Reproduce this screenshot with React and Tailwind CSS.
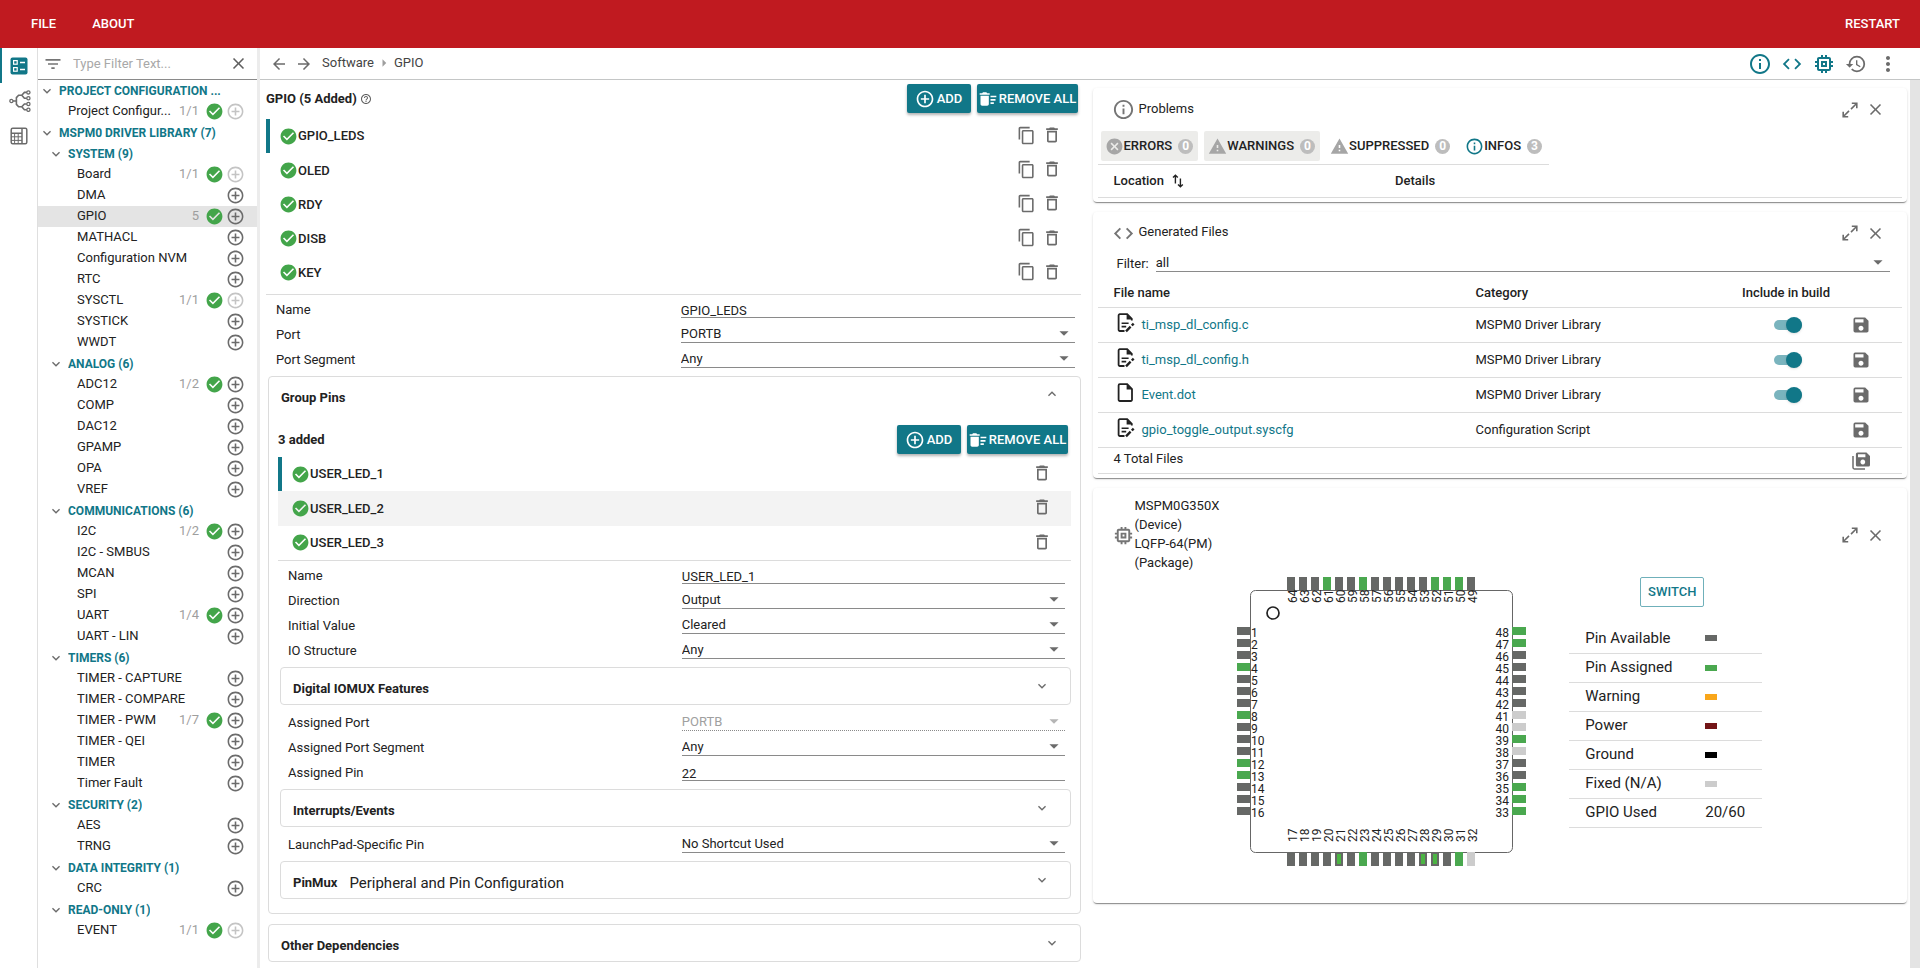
import { useState } from 'react'
import clsx from 'clsx'
import {
  MdAddCircleOutline,
  MdArrowBack,
  MdArrowDropDown,
  MdArrowForward,
  MdArrowRight,
  MdCancel,
  MdCheckCircle,
  MdClose,
  MdCode,
  MdContentCopy,
  MdDeleteSweep,
  MdExpandLess,
  MdExpandMore,
  MdFilterList,
  MdHelpOutline,
  MdHistory,
  MdInfoOutline,
  MdMemory,
  MdMoreVert,
  MdOutlineDelete,
  MdSave,
  MdWarning,
} from 'react-icons/md'

const TREE = [
  { type: 'root', label: 'PROJECT CONFIGURATION ...' },
  { type: 'item', label: 'Project Configur...', count: '1/1', full: true, shallow: true },
  { type: 'root', label: 'MSPM0 DRIVER LIBRARY (7)' },
  { type: 'group', label: 'SYSTEM (9)' },
  { type: 'item', label: 'Board', count: '1/1', full: true },
  { type: 'item', label: 'DMA' },
  { type: 'item', label: 'GPIO', count: '5', active: true },
  { type: 'item', label: 'MATHACL' },
  { type: 'item', label: 'Configuration NVM' },
  { type: 'item', label: 'RTC' },
  { type: 'item', label: 'SYSCTL', count: '1/1', full: true },
  { type: 'item', label: 'SYSTICK' },
  { type: 'item', label: 'WWDT' },
  { type: 'group', label: 'ANALOG (6)' },
  { type: 'item', label: 'ADC12', count: '1/2' },
  { type: 'item', label: 'COMP' },
  { type: 'item', label: 'DAC12' },
  { type: 'item', label: 'GPAMP' },
  { type: 'item', label: 'OPA' },
  { type: 'item', label: 'VREF' },
  { type: 'group', label: 'COMMUNICATIONS (6)' },
  { type: 'item', label: 'I2C', count: '1/2' },
  { type: 'item', label: 'I2C - SMBUS' },
  { type: 'item', label: 'MCAN' },
  { type: 'item', label: 'SPI' },
  { type: 'item', label: 'UART', count: '1/4' },
  { type: 'item', label: 'UART - LIN' },
  { type: 'group', label: 'TIMERS (6)' },
  { type: 'item', label: 'TIMER - CAPTURE' },
  { type: 'item', label: 'TIMER - COMPARE' },
  { type: 'item', label: 'TIMER - PWM', count: '1/7' },
  { type: 'item', label: 'TIMER - QEI' },
  { type: 'item', label: 'TIMER' },
  { type: 'item', label: 'Timer Fault' },
  { type: 'group', label: 'SECURITY (2)' },
  { type: 'item', label: 'AES' },
  { type: 'item', label: 'TRNG' },
  { type: 'group', label: 'DATA INTEGRITY (1)' },
  { type: 'item', label: 'CRC' },
  { type: 'group', label: 'READ-ONLY (1)' },
  { type: 'item', label: 'EVENT', count: '1/1', full: true },
]

const INSTANCES = ['GPIO_LEDS', 'OLED', 'RDY', 'DISB', 'KEY']
const PINS = ['USER_LED_1', 'USER_LED_2', 'USER_LED_3']

const FILES = [
  { name: 'ti_msp_dl_config.c', category: 'MSPM0 Driver Library', edited: true, include: true },
  { name: 'ti_msp_dl_config.h', category: 'MSPM0 Driver Library', edited: true, include: true },
  { name: 'Event.dot', category: 'MSPM0 Driver Library', edited: false, include: true },
  { name: 'gpio_toggle_output.syscfg', category: 'Configuration Script', edited: true, include: false },
]

const LEGEND = [
  { label: 'Pin Available', color: 'bg-[#666866]' },
  { label: 'Pin Assigned', color: 'bg-[#4aa84f]' },
  { label: 'Warning', color: 'bg-[#f9a61a]' },
  { label: 'Power', color: 'bg-[#731517]' },
  { label: 'Ground', color: 'bg-black' },
  { label: 'Fixed (N/A)', color: 'bg-[#cccccc]' },
]

const ASSIGNED = [4, 8, 12, 13, 23, 31, 33, 34, 35, 39, 47, 48, 50, 51, 52, 58, 61]
const FIXED = [32, 38, 40, 41]
const SHARED = [21, 28, 29]

function pinColor(n) {
  if (ASSIGNED.includes(n)) return '#4aa84f'
  if (FIXED.includes(n)) return '#cccccc'
  return '#666866'
}

function ConfigIcon() {
  return (
    <svg width="18" height="18" viewBox="0 0 18 18" fill="none">
      <rect x="0.5" y="0.5" width="17" height="17" rx="2" fill="#117788" />
      <g stroke="#fff" strokeWidth="1.2">
        <rect x="3.6" y="3.6" width="3.6" height="3.6" />
        <rect x="3.6" y="10.6" width="3.6" height="3.6" />
        <path d="M10 5.5h5M10 12.5h5" strokeWidth="1.6" />
      </g>
    </svg>
  )
}

function TreeIcon() {
  return (
    <svg width="22" height="22" viewBox="0 0 22 22" fill="none" stroke="#6b6b6b" strokeWidth="1.3">
      <circle cx="2.4" cy="11" r="1.6" />
      <circle cx="19.4" cy="2.4" r="1.6" />
      <circle cx="19.4" cy="8.2" r="1.6" />
      <circle cx="19.4" cy="14" r="1.6" />
      <circle cx="19.4" cy="19.8" r="1.6" />
      <path d="M4 11h3.4M17.8 2.4h-2.4l-2.6 2.8 2.6 3h2.4M17.8 14h-2.4l-2.6 2.8 2.6 3h2.4M12.8 5.2H9.6L7.4 7.6v6.8l2.2 2.4h3.2" strokeWidth="1.6" />
    </svg>
  )
}

function BoardIcon() {
  return (
    <svg width="18" height="18" viewBox="0 0 18 18" fill="none" stroke="#6b6b6b">
      <rect x="1.2" y="1.2" width="15.6" height="15.6" rx="1.5" strokeWidth="1.5" />
      <path d="M12 1v16M1 6.2h11" strokeWidth="1.5" />
      <path d="M4.6 6v11M8.2 6v11M1 9.8h11M1 13.4h11" strokeWidth="1" />
    </svg>
  )
}

function ExpandIcon() {
  return (
    <svg width="16" height="16" viewBox="0 0 16 16" fill="none" stroke="currentColor" strokeWidth="1.6">
      <path d="M9.8 1.3h5v5M14.6 1.5L9 7.1M6.2 14.7h-5v-5M1.4 14.5L7 8.9" />
    </svg>
  )
}

function SwapIcon() {
  return (
    <svg width="12" height="14" viewBox="0 0 12 14" fill="none" stroke="#222" strokeWidth="1.4">
      <path d="M3.4 9.5V1.2M1 3.6l2.4-2.4 2.4 2.4M8.4 4.5v8.3M6 10.4l2.4 2.4 2.4-2.4" />
    </svg>
  )
}

function FileIcon({ edited }) {
  return (
    <svg width="18" height="20" viewBox="0 0 18 20" fill="none" stroke="#222" strokeWidth="1.8">
      {edited ? (
        <>
          <path d="M7.5 18H2.8a1.2 1.2 0 0 1-1.2-1.2V2.4a1.2 1.2 0 0 1 1.2-1.2h7.4l4.6 4.6v1.6" />
          <path d="M9.6 1v5.4H15z" fill="#222" stroke="none" />
          <path d="M4.6 10.2h7M4.6 13.6h4.6" strokeWidth="1.6" />
          <path d="M9 18.3l4.6-4.6M14.8 12.5l1.9-1.9" strokeWidth="2.4" />
        </>
      ) : (
        <>
          <path d="M2.8 1.2h7.4l4.8 4.8v10.8a1.2 1.2 0 0 1-1.2 1.2h-11a1.2 1.2 0 0 1-1.2-1.2V2.4a1.2 1.2 0 0 1 1.2-1.2z" />
          <path d="M9.6 1v5.4H15z" fill="#222" stroke="none" />
        </>
      )}
    </svg>
  )
}

function SaveAllIcon() {
  return (
    <svg width="18" height="18" viewBox="0 0 18 18" fill="none">
      <path d="M1 4v11.6A1.4 1.4 0 0 0 2.4 17H13" stroke="#6b6b6b" strokeWidth="1.5" />
      <path fillRule="evenodd" fill="#6b6b6b" d="M5.5.5h9L18 4v9a1.6 1.6 0 0 1-1.6 1.6H5.5A1.6 1.6 0 0 1 3.9 13V2.1A1.6 1.6 0 0 1 5.5.5zM6 2.2v3h7.4v-3zM10.8 7.6a2.4 2.4 0 1 0 .01 0z" />
    </svg>
  )
}

function TreeRow({ node }) {
  if (node.type !== 'item') {
    return (
      <li className={clsx('flex h-[21px] items-center pr-6', node.type === 'root' ? 'pl-px' : 'pl-[10px]')}>
        <button aria-label={`Collapse ${node.label}`} className="mr-1 shrink-0 text-[#6b6b6b]">
          <MdExpandMore size={16} />
        </button>
        <span className="truncate text-xs font-bold text-[#117788]">{node.label}</span>
      </li>
    )
  }

  return (
    <li
      className={clsx(
        'flex h-[21px] items-center pr-3',
        node.shallow ? 'pl-[30px]' : 'pl-[39px]',
        node.active && 'bg-[#e4e4e4]'
      )}
    >
      <a href="#" className="min-w-0 flex-1 pb-[2px] whitespace-nowrap">{node.label}</a>
      {node.count && (
        <>
          <span className="mr-[6px] pb-[2px] text-[#9e9e9e]">{node.count}</span>
          <MdCheckCircle size={19} className="mr-[2px] shrink-0 text-[#43a54a]" />
        </>
      )}
      <button
        aria-label={`Add ${node.label}`}
        disabled={node.full}
        className={clsx('shrink-0', node.full ? 'text-[#c4c4c4]' : 'text-[#6b6b6b]')}
      >
        <MdAddCircleOutline size={19} />
      </button>
    </li>
  )
}

function Sidebar() {
  return (
    <aside className="flex w-[219px] shrink-0 flex-col">
      <div className="flex h-8 items-center border-b border-[#8a8a8a] pr-[9px] pl-[5px]">
        <MdFilterList size={20} className="shrink-0 text-[#757575]" />
        <input
          type="text"
          aria-label="Filter"
          placeholder="Type Filter Text..."
          className="ml-[10px] min-w-0 flex-1 outline-none placeholder:text-[#a8a8a8]"
        />
        <button aria-label="Clear filter" className="text-[#5f5f5f]">
          <MdClose size={19} />
        </button>
      </div>
      <ul>
        {TREE.map(node => (
          <TreeRow key={node.label} node={node} />
        ))}
      </ul>
    </aside>
  )
}

function Toolbar() {
  return (
    <div className="flex h-8 items-center border-b border-[#c4c6c6] pr-5 pl-[10px] text-[#6b6b6b]">
      <button aria-label="Back"><MdArrowBack size={18} /></button>
      <button aria-label="Forward" className="ml-[7px]"><MdArrowForward size={18} /></button>
      <nav className="ml-[9px] flex flex-1 items-center pb-[2px] text-[#444]">
        <a href="#">Software</a>
        <MdArrowRight size={18} className="mx-px text-[#9e9e9e]" />
        <a href="#">GPIO</a>
      </nav>
      <div className="flex items-center gap-2 text-[#117788]">
        <button aria-label="Problems"><MdInfoOutline size={24} /></button>
        <button aria-label="Generated files"><MdCode size={22} className="mx-px" /></button>
        <button aria-label="Device view"><MdMemory size={24} /></button>
        <button aria-label="History" className="text-[#6b6b6b]"><MdHistory size={22} className="mx-px" /></button>
        <button aria-label="More" className="text-[#6b6b6b]"><MdMoreVert size={24} /></button>
      </div>
    </div>
  )
}

function ActionButtons() {
  const base = 'flex h-[29px] items-center rounded-xs bg-[#117788] font-medium text-white shadow-[0_2px_3px_rgba(0,0,0,0.3)]'
  return (
    <div className="flex gap-[6px]">
      <button className={clsx(base, 'w-16 justify-center gap-[2px]')}>
        <MdAddCircleOutline size={20} />
        ADD
      </button>
      <button className={clsx(base, 'w-[101px] justify-center gap-px')}>
        <MdDeleteSweep size={20} className="shrink-0" />
        <span className="whitespace-nowrap">REMOVE ALL</span>
      </button>
    </div>
  )
}

function InstanceRow({ name, active, hovered, copy }) {
  return (
    <li
      className={clsx(
        'flex items-center border-l-4 pr-[19px] pl-[9px]',
        active ? 'border-[#117788]' : 'border-transparent',
        hovered && 'bg-[#f3f3f3]'
      )}
    >
      <MdCheckCircle size={19} className="shrink-0 text-[#43a54a]" />
      <span className="flex-1 font-medium">{name}</span>
      <div className="flex items-center gap-[6px] pb-[2px] text-[#6b6b6b]">
        {copy && <button aria-label={`Copy ${name}`}><MdContentCopy size={19} /></button>}
        <button aria-label={`Delete ${name}`}><MdOutlineDelete size={20} /></button>
      </div>
    </li>
  )
}

function Field({ id, label, value, select, disabled }) {
  return (
    <div className="grid h-[25px] grid-cols-2 items-start gap-[11px] pt-[5px] pr-[6px] pl-[10px]">
      <label htmlFor={id} className="leading-[19px]">{label}</label>
      {select ? (
        <div className="relative h-[18px]">
          <select
            id={id}
            disabled={disabled}
            className={clsx(
              'block h-[18px] w-full appearance-none border-b leading-[17px] outline-none',
              disabled ? 'border-dotted border-[#8a8a8a] text-[#a0a0a0] opacity-100' : 'border-[#8a8a8a]'
            )}
          >
            <option>{value}</option>
          </select>
          <MdArrowDropDown
            size={22}
            className={clsx('pointer-events-none absolute -top-[3px] right-0', disabled ? 'text-[#b5b5b5]' : 'text-[#6b6b6b]')}
          />
        </div>
      ) : (
        <input
          id={id}
          type="text"
          defaultValue={value}
          className="h-[18px] w-full border-b border-[#8a8a8a] pt-[3px] leading-[14px] outline-none"
        />
      )}
    </div>
  )
}

function Collapsed({ title, note, className }) {
  return (
    <button
      className={clsx(
        'flex h-[38px] items-center rounded border border-[#dcdcdc] pt-[6px] pl-3 text-left',
        className
      )}
    >
      <span className="font-bold">{title}</span>
      {note && <span className="ml-3 text-[15px]">{note}</span>}
      <MdExpandMore size={16} className="mb-[6px] ml-auto text-[#6b6b6b]" />
    </button>
  )
}

function GroupPins() {
  return (
    <section className="mt-[6px] ml-[2px] rounded border border-[#dcdcdc] pr-[9px] pb-[14px] pl-[9px]">
      <div className="flex h-10 items-center pr-[11px] pl-[3px]">
        <h3 className="flex-1 pt-[2px] font-bold">Group Pins</h3>
        <button aria-label="Collapse Group Pins" className="mb-[6px] text-[#6b6b6b]">
          <MdExpandLess size={16} />
        </button>
      </div>
      <div className="mt-2 flex items-center pr-[3px]">
        <h4 className="flex-1 font-bold">3 added</h4>
        <ActionButtons />
      </div>
      <ul className="mt-[3px] grid h-[104px] auto-rows-fr border-b border-[#dcdcdc]">
        {PINS.map((name, i) => (
          <InstanceRow key={name} name={name} active={i === 0} hovered={i === 1} />
        ))}
      </ul>
      <Field id="pin-name" label="Name" value="USER_LED_1" />
      <Field id="pin-direction" label="Direction" value="Output" select />
      <Field id="pin-initial" label="Initial Value" value="Cleared" select />
      <Field id="pin-io" label="IO Structure" value="Any" select />
      <Collapsed title="Digital IOMUX Features" className="mt-[6px] mb-[3px] ml-[2px] w-[calc(100%-2px)] pr-5" />
      <Field id="pin-port" label="Assigned Port" value="PORTB" select disabled />
      <Field id="pin-segment" label="Assigned Port Segment" value="Any" select />
      <Field id="pin-assigned" label="Assigned Pin" value="22" />
      <Collapsed title="Interrupts/Events" className="mt-[6px] mb-[3px] ml-[2px] w-[calc(100%-2px)] pr-5" />
      <Field id="pin-launchpad" label="LaunchPad-Specific Pin" value="No Shortcut Used" select />
      <Collapsed
        title="PinMux"
        note="Peripheral and Pin Configuration"
        className="mt-[6px] ml-[2px] w-[calc(100%-2px)] pr-5"
      />
    </section>
  )
}

function ModulePanel() {
  return (
    <section className="flex min-w-0 flex-1 flex-col pt-1 pr-1 pb-[6px] pl-[6px]">
      <div className="flex items-center pr-[3px]">
        <h2 className="font-bold">GPIO (5 Added)</h2>
        <button aria-label="Help" className="ml-[3px] flex-1 text-[#5f5f5f]">
          <MdHelpOutline size={12} />
        </button>
        <ActionButtons />
      </div>
      <ul className="mt-[6px] grid h-[176px] auto-rows-fr border-b border-[#dcdcdc] pb-1">
        {INSTANCES.map((name, i) => (
          <InstanceRow key={name} name={name} active={i === 0} copy />
        ))}
      </ul>
      <Field id="name" label="Name" value="GPIO_LEDS" />
      <Field id="port" label="Port" value="PORTB" select />
      <Field id="segment" label="Port Segment" value="Any" select />
      <GroupPins />
      <Collapsed title="Other Dependencies" className="mt-[10px] ml-[2px] pr-5" />
    </section>
  )
}

function Card({ icon, title, className, children }) {
  return (
    <section className="rounded bg-white px-[5px] shadow-[0_2px_1px_-1px_rgba(0,0,0,0.3),0_1px_1px_rgba(0,0,0,0.14),0_1px_3px_rgba(0,0,0,0.12)]">
      <div className={clsx('flex items-center pr-[17px] pl-[14px]', className)}>
        <span className="text-[#757575]">{icon}</span>
        <div className="flex-1 pb-[2px]">{title}</div>
        <div className="flex items-center gap-2 text-[#6b6b6b]">
          <button aria-label="Expand"><ExpandIcon /></button>
          <button aria-label="Close"><MdClose size={19} /></button>
        </div>
      </div>
      {children}
    </section>
  )
}

function FilterChip({ icon, label, count, on }) {
  return (
    <button
      aria-pressed={on}
      className={clsx('flex h-[30px] items-center rounded-xs pr-[5px] pl-1 font-medium', on && 'bg-[#ececea]')}
    >
      {icon}
      <span>{label}</span>
      <span className="ml-[6px] flex size-[15px] items-center justify-center rounded-full bg-[#bdbdbd] text-xs font-bold text-white">
        {count}
      </span>
    </button>
  )
}

function ProblemsCard() {
  return (
    <Card
      icon={<MdInfoOutline size={23} />}
      title={<h2 className="ml-1">Problems</h2>}
      className="h-[43px]"
    >
      <div className="flex w-fit gap-[6px] border-b border-[#dcdcdc] pr-[2px] pb-[3px] pl-[3px]">
        <FilterChip on label="ERRORS" count={0} icon={<MdCancel size={19} className="text-[#a6a6a6]" />} />
        <FilterChip on label="WARNINGS" count={0} icon={<MdWarning size={19} className="text-[#a6a6a6]" />} />
        <FilterChip label="SUPPRESSED" count={0} icon={<MdWarning size={19} className="text-[#a6a6a6]" />} />
        <FilterChip label="INFOS" count={3} icon={<MdInfoOutline size={19} className="text-[#117788]" />} />
      </div>
      <div className="pb-1">
        <table className="w-full table-fixed text-left">
          <thead>
            <tr className="h-8 border-b border-[#dcdcdc]">
              <th className="w-[35%] pl-4 font-medium">
                <span className="flex items-center gap-2">Location <SwapIcon /></span>
              </th>
              <th className="pl-4 font-medium">Details</th>
            </tr>
          </thead>
        </table>
      </div>
    </Card>
  )
}

function FilesCard() {
  const [included, setIncluded] = useState(FILES.map(f => f.include))

  const toggle = (index) => {
    setIncluded(prev => prev.map((on, i) => (i === index ? !on : on)))
  }

  return (
    <Card
      icon={<MdCode size={23} />}
      title={<h2 className="ml-1">Generated Files</h2>}
      className="h-[43px]"
    >
      <div className="flex items-start pr-3 pl-[19px]">
        <label htmlFor="file-filter" className="mr-[7px] leading-[17px]">Filter:</label>
        <div className="relative flex-1">
          <select id="file-filter" className="block h-[17px] w-full appearance-none border-b border-[#8a8a8a] leading-4 outline-none">
            <option>all</option>
          </select>
          <MdArrowDropDown size={22} className="pointer-events-none absolute -top-1 right-px text-[#6b6b6b]" />
        </div>
      </div>
      <div className="pb-1">
        <table className="w-full table-fixed text-left">
          <thead>
            <tr className="h-9 border-b border-[#dcdcdc]">
              <th className="w-[45%] pt-[6px] pl-4 font-medium">File name</th>
              <th className="pt-[6px] pl-4 font-medium">Category</th>
              <th className="w-[114px] pt-[6px] text-center font-medium">Include in build</th>
              <th className="w-[59px]" aria-label="Save" />
            </tr>
          </thead>
          <tbody>
            {FILES.map((file, i) => (
              <tr key={file.name} className="h-[35px] border-b border-[#dcdcdc]">
                <td className="pl-[19px]">
                  <span className="flex items-center gap-[7px]">
                    <span className="mb-[5px]"><FileIcon edited={file.edited} /></span>
                    <a href="#" className="text-[#117788]">{file.name}</a>
                  </span>
                </td>
                <td className="pl-4">{file.category}</td>
                <td className="pl-1">
                  {file.include && (
                    <input
                      type="checkbox"
                      role="switch"
                      aria-label={`Include ${file.name} in build`}
                      checked={included[i]}
                      onChange={() => toggle(i)}
                      className="relative mx-auto block h-[10px] w-7 appearance-none rounded-full bg-[#bdbdbd] before:absolute before:-top-[3px] before:left-0 before:size-4 before:rounded-full before:bg-white before:shadow checked:bg-[#7ab4be] checked:before:left-3 checked:before:bg-[#117788]"
                    />
                  )}
                </td>
                <td className="pl-2">
                  <button aria-label={`Save ${file.name}`} className="block text-[#6b6b6b]">
                    <MdSave size={20} />
                  </button>
                </td>
              </tr>
            ))}
            <tr className="h-[26px] border-b border-[#dcdcdc]">
              <td colSpan={3} className="pb-[3px] pl-4">4 Total Files</td>
              <td className="pl-[9px]">
                <button aria-label="Save all" className="block"><SaveAllIcon /></button>
              </td>
            </tr>
          </tbody>
        </table>
      </div>
    </Card>
  )
}

function PackageDrawing() {
  const steps = Array.from({ length: 16 }, (_, i) => i)
  return (
    <svg width="290" height="290" viewBox="0 0 290 290" className="shrink-0" fontSize="12" fill="#222">
      <rect x="13.5" y="13.5" width="262" height="262" rx="5" fill="#fff" stroke="#666" />
      <circle cx="36" cy="36" r="6" fill="none" stroke="#222" strokeWidth="1.7" />
      {steps.map(i => {
        const left = i + 1
        const bottom = i + 17
        const right = 48 - i
        const top = 64 - i
        const along = 50 + i * 12
        return (
          <g key={i}>
            <rect x="0" y={along} width="13" height="8" fill={pinColor(left)} />
            <text x="14" y={along + 10}>{left}</text>
            <rect x="275" y={along} width="14" height="8" fill={pinColor(right)} />
            <text x="272" y={along + 10} textAnchor="end">{right}</text>
            <rect x={along} y="0" width="8" height="13" fill={pinColor(top)} />
            <text transform={`translate(${along + 10} 26) rotate(-90)`}>{top}</text>
            <rect x={along} y="275" width="8" height="14" fill={pinColor(bottom)} />
            {SHARED.includes(bottom) && <rect x={along + 2} y="277" width="4" height="10" fill="#4bb543" />}
            <text transform={`translate(${along + 10} 265) rotate(-90)`}>{bottom}</text>
          </g>
        )
      })}
    </svg>
  )
}

function DeviceCard() {
  return (
    <Card
      icon={<MdMemory size={23} />}
      title={
        <h2 className="leading-[19px]">
          MSPM0G350X<br />(Device)<br />LQFP-64(PM)<br />(Package)
        </h2>
      }
      className="pt-2"
    >
      <div className="flex items-start justify-center pt-[3px] pb-9">
        <PackageDrawing />
        <div className="ml-[42px] flex w-[193px] flex-col items-center">
          <button className="ml-[13px] h-[30px] w-16 rounded-xs border border-[#6fb0ba] font-medium text-[#117788]">
            SWITCH
          </button>
          <table className="mt-[17px] w-full text-left text-[15px]">
            <tbody>
              {LEGEND.map(entry => (
                <tr key={entry.label} className="h-[29px] border-b border-[#dcdcdc]">
                  <td className="w-[136px] pl-4">{entry.label}</td>
                  <td><span className={clsx('block h-[6px] w-3', entry.color)} /></td>
                </tr>
              ))}
              <tr className="h-[29px] border-b border-[#dcdcdc]">
                <td className="pl-4">GPIO Used</td>
                <td>20/60</td>
              </tr>
            </tbody>
          </table>
        </div>
      </div>
    </Card>
  )
}

function App() {
  return (
    <div className="flex min-h-screen flex-col bg-white font-[Roboto,'Liberation_Sans',sans-serif] text-[13px] text-[#222]">
      <header className="flex h-12 items-center bg-[#c01a20] pr-5 pl-[31px] font-medium text-white">
        <button>FILE</button>
        <button className="ml-9">ABOUT</button>
        <button className="ml-auto">RESTART</button>
      </header>

      <div className="flex flex-1">
        {/* View switcher */}
        <nav className="flex w-[38px] shrink-0 flex-col border-r border-[#dfdfdf]">
          <button aria-label="Software" className="flex h-[35px] items-center border-l-2 border-[#117788] pl-2"><ConfigIcon /></button>
          <button aria-label="Block diagram" className="flex h-[35px] items-center border-l-2 border-transparent pl-[7px]"><TreeIcon /></button>
          <button aria-label="Board view" className="flex h-[35px] items-center border-l-2 border-transparent pl-2"><BoardIcon /></button>
        </nav>

        <Sidebar />
        <div className="w-[3px] shrink-0 bg-[#ececec]" />

        <div className="flex min-w-0 flex-1 flex-col">
          <Toolbar />
          <div className="flex flex-1">
            <main className="flex min-w-0 flex-1">
              <ModulePanel />
              <div className="flex min-w-0 flex-1 flex-col gap-[10px] pt-2 pr-[3px] pl-2">
                <ProblemsCard />
                <FilesCard />
                <DeviceCard />
              </div>
            </main>
            <div className="w-[10px] shrink-0 bg-[#e4e4e4]" />
          </div>
        </div>
      </div>
    </div>
  )
}

export default App
